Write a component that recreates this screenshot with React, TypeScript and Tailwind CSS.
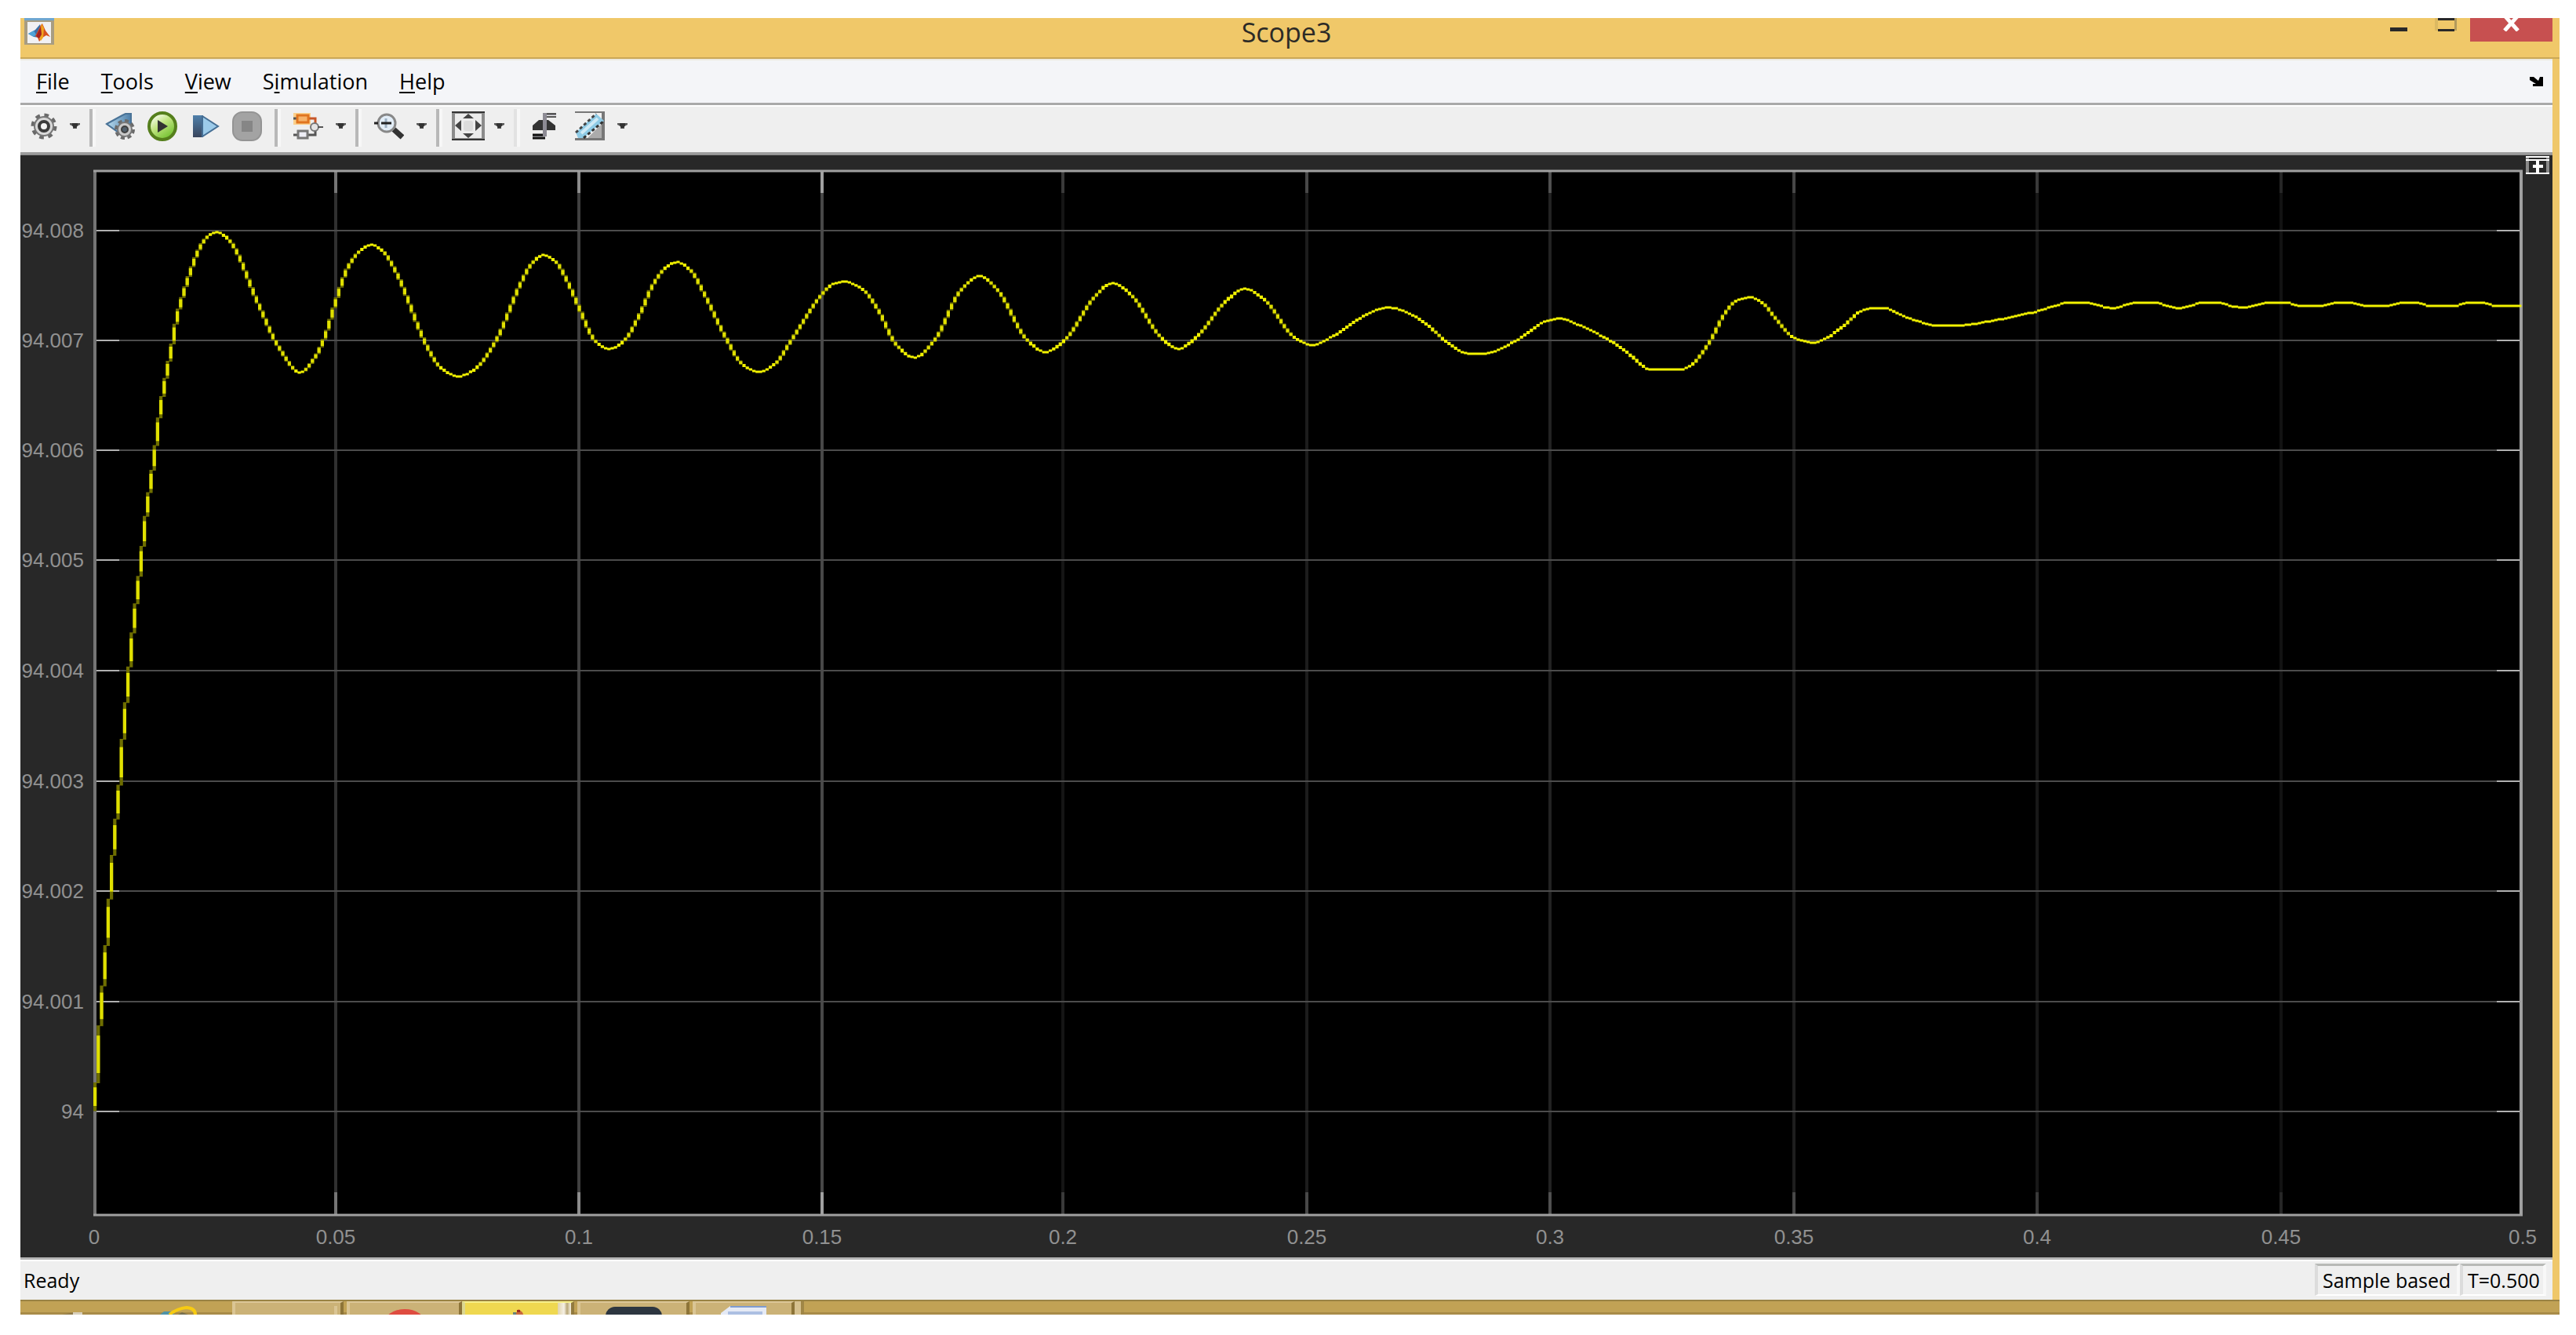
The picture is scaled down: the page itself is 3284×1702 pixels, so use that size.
import type { ButtonHTMLAttributes, ReactNode } from 'react';
import clsx from 'clsx';

type Point = [number, number];

const MENUS = ['File', 'Tools', 'View', 'Simulation', 'Help'];

/* Plot area inside the scope canvas */
const LEFT = 121;
const RIGHT = 3214;
const TOP = 218;
const BOTTOM = 1549;

const Y_TICKS = [
  { label: '94.008', y: 294 },
  { label: '94.007', y: 434 },
  { label: '94.006', y: 574 },
  { label: '94.005', y: 714 },
  { label: '94.004', y: 855 },
  { label: '94.003', y: 996 },
  { label: '94.002', y: 1136 },
  { label: '94.001', y: 1277 },
  { label: '94', y: 1417 },
];

const X_TICKS = [
  { label: '0', x: 120 },
  { label: '0.05', x: 428, line: '#303030', tick: '#757575' },
  { label: '0.1', x: 738, line: '#404040', tick: '#8c8c8c' },
  { label: '0.15', x: 1048, line: '#484848', tick: '#a0a0a0' },
  { label: '0.2', x: 1355, line: '#151515', tick: '#3a3a3a' },
  { label: '0.25', x: 1666, line: '#1c1c1c', tick: '#484848' },
  { label: '0.3', x: 1976, line: '#222222', tick: '#505050' },
  { label: '0.35', x: 2287, line: '#1e1e1e', tick: '#484848' },
  { label: '0.4', x: 2597, line: '#181818', tick: '#3a3a3a' },
  { label: '0.45', x: 2908, line: '#121212', tick: '#262626' },
  { label: '0.5', x: 3216 },
];

const SIGNAL: Point[] = [
  [121, 1416], [125, 1351], [129, 1283], [134, 1233], [138, 1170], [142, 1123], [146, 1066],
  [151, 1021], [155, 967], [159, 915], [163, 877], [167, 829], [171, 793], [176, 749],
  [180, 717], [184, 676], [188, 645], [193, 610], [197, 583], [201, 549], [205, 518],
  [209, 496], [214, 468], [218, 449], [222, 425], [226, 403], [234, 374], [243, 346],
  [251, 324], [260, 307], [268, 299], [276, 296], [292, 306], [330, 389], [355, 442],
  [383, 475], [402, 455], [414, 430], [428, 385], [444, 340], [460, 319], [473, 312],
  [487, 319], [505, 347], [545, 443], [562, 469], [584, 480], [605, 471], [632, 435],
  [664, 361], [678, 336], [693, 325], [708, 333], [724, 360], [738, 392], [760, 436],
  [778, 445], [796, 434], [817, 398], [832, 364], [848, 342], [863, 334], [880, 344],
  [898, 375], [925, 430], [947, 465], [967, 474], [987, 465], [1010, 432], [1048, 375],
  [1062, 362], [1077, 359], [1100, 369], [1120, 396], [1143, 440], [1166, 456], [1192, 433],
  [1225, 370], [1249, 352], [1272, 370], [1309, 433], [1333, 449], [1358, 433], [1396, 378],
  [1418, 361], [1442, 376], [1480, 430], [1502, 445], [1527, 428], [1562, 385], [1587, 368],
  [1612, 382], [1650, 430], [1672, 440], [1695, 431], [1735, 405], [1755, 395], [1771, 392],
  [1795, 399], [1822, 416], [1843, 435], [1868, 450], [1876, 451], [1892, 451], [1935, 433],
  [1970, 410], [1988, 406], [2012, 414], [2050, 433], [2075, 450], [2095, 467], [2103, 471],
  [2143, 471], [2156, 466], [2170, 450], [2183, 430], [2198, 401], [2214, 383], [2231, 379],
  [2247, 386], [2262, 404], [2286, 430], [2300, 435], [2312, 437], [2325, 433], [2352, 414],
  [2372, 397], [2386, 393], [2404, 393], [2422, 401], [2450, 411], [2470, 415], [2497, 415],
  [2540, 409], [2570, 403], [2597, 397], [2620, 390], [2637, 386], [2663, 386], [2677, 390],
  [2692, 393], [2710, 389], [2722, 386], [2748, 386], [2762, 390], [2776, 393], [2795, 389],
  [2806, 386], [2830, 386], [2844, 390], [2858, 392], [2877, 389], [2890, 386], [2916, 386],
  [2930, 390], [2961, 390], [2976, 386], [2998, 386], [3014, 390], [3046, 390], [3060, 386],
  [3080, 386], [3098, 390], [3130, 390], [3146, 386], [3164, 386], [3182, 390], [3214, 390],
];

/* Monotone cubic interpolation, keeps the extrema of the signal where they are */
function interpolate(points: Point[]) {
  const n = points.length;
  const slope: number[] = [];
  for (let i = 0; i < n - 1; i++) {
    slope.push((points[i + 1][1] - points[i][1]) / (points[i + 1][0] - points[i][0]));
  }
  const tangent = points.map((_, i) => {
    if (i === 0) return slope[0];
    if (i === n - 1) return slope[n - 2];
    if (slope[i - 1] * slope[i] <= 0) return 0;
    return (2 * slope[i - 1] * slope[i]) / (slope[i - 1] + slope[i]);
  });

  return (x: number) => {
    let i = 0;
    while (i < n - 2 && points[i + 1][0] < x) i++;
    const h = points[i + 1][0] - points[i][0];
    const t = Math.min(1, Math.max(0, (x - points[i][0]) / h));
    const t2 = t * t;
    const t3 = t2 * t;
    return (
      (2 * t3 - 3 * t2 + 1) * points[i][1] +
      (t3 - 2 * t2 + t) * h * tangent[i] +
      (3 * t2 - 2 * t3) * points[i + 1][1] +
      (t3 - t2) * h * tangent[i + 1]
    );
  };
}

function column(x: number, center: number, width: number, height: number) {
  return `M${x.toFixed(1)} ${(center - height / 2).toFixed(1)}h${width}v${height.toFixed(1)}h-${width}z`;
}

/* The scope rasterises its trace in columns; steep ones fade towards their ends */
function buildTrace() {
  const at = interpolate(SIGNAL);
  const step = 4.2;
  const paths = { flat: '', bright: '', dim: '' };
  for (let x = LEFT - 2; x < RIGHT; x += step) {
    const y1 = at(x);
    const y2 = at(Math.min(RIGHT, x + step));
    const center = (y1 + y2) / 2;
    const height = Math.max(3, Math.abs(y2 - y1) + 1);
    if (height < 5) {
      paths.flat += column(x, Math.round(center), step, height);
    } else {
      paths.dim += column(x, center, step, height);
      paths.bright += column(x, center, step, height * 0.65);
    }
  }
  return paths;
}

const TRACE = buildTrace();

interface ToolButtonProps extends ButtonHTMLAttributes<HTMLButtonElement> {
  label: string;
  children: ReactNode;
}

function ToolButton({ label, children, className, ...props }: ToolButtonProps) {
  return (
    <button type="button" aria-label={label} className={clsx('shrink-0', className)} {...props}>
      {children}
    </button>
  );
}

function Caret({ label, className }: { label: string; className?: string }) {
  return (
    <ToolButton label={label} className={className}>
      <svg width="13" height="7" viewBox="0 0 13 7" className="block">
        <path d="M0 0h13v2L9 4v3H4V4L0 2z" fill="#5a5a5a" />
        <path d="M3 0h7v3L8 6H5L3 3z" fill="#333" />
      </svg>
    </ToolButton>
  );
}

function Separator({ faint = false, className }: { faint?: boolean; className?: string }) {
  return (
    <div
      className={clsx(
        'h-12 w-2 shrink-0 self-end border-l-4 bg-[#f7f7f7]',
        faint ? 'border-[#e2e2e2]' : 'border-[#b8b8b8]',
        className,
      )}
    />
  );
}

function MatlabIcon() {
  return (
    <svg width="38" height="34" viewBox="0 0 38 34">
      <path d="M0 0h38v3H0z" fill="#6ea6d0" />
      <path d="M0 3h38v31H0z" fill="#a89d82" />
      <path d="M4 5h30v27H4z" fill="#f1f1f3" />
      <path d="M5 20l9-5 6-7 2 8-3 9-7-1z" fill="#3b6fa8" />
      <path d="M5 20l7-4 3 5-3 3z" fill="#4fa3d6" />
      <path d="M14 23l7-14 2-2 4 9 6 8-5-2-5 3-4 5-2-5z" fill="#d8531e" />
      <path d="M22 7l3 6-1 12-3 4-2-3z" fill="#f0a51e" />
      <path d="M15 23l6-12 1 10-3 5z" fill="#a32222" />
    </svg>
  );
}

function GearIcon() {
  return (
    <svg width="34" height="34" viewBox="0 0 34 34" className="block">
      <circle cx="17" cy="17" r="14" fill="none" stroke="#6a6a6a" strokeWidth="5" strokeDasharray="5.5 5.5" />
      <circle cx="17" cy="17" r="12" fill="#d9d9d9" stroke="#777" strokeWidth="2" />
      <circle cx="17" cy="17" r="6" fill="#f4f4f4" stroke="#3c3c3c" strokeWidth="4" />
    </svg>
  );
}

function StepBackIcon() {
  return (
    <svg width="38" height="34" viewBox="0 0 38 34" className="block">
      <defs>
        <linearGradient id="back" x1="0" x2="1">
          <stop offset="0" stopColor="#b9dcf0" />
          <stop offset="1" stopColor="#4d7ea8" />
        </linearGradient>
      </defs>
      <path d="M2 14L22 3l4-2h7v20l-13 6z" fill="url(#back)" stroke="#4a7397" strokeWidth="2" />
      <circle cx="25" cy="21" r="11" fill="none" stroke="#6b6b6b" strokeWidth="4" strokeDasharray="5 3.6" />
      <circle cx="25" cy="21" r="9" fill="#c9c9c9" stroke="#777" strokeWidth="2" />
      <circle cx="25" cy="21" r="4" fill="#53606b" stroke="#3f3f3f" strokeWidth="2" />
    </svg>
  );
}

function RunIcon() {
  return (
    <svg width="38" height="38" viewBox="0 0 38 38" className="block">
      <defs>
        <linearGradient id="run" x1="0" y1="0" x2="0.7" y2="1">
          <stop offset="0.1" stopColor="#ffffff" />
          <stop offset="0.5" stopColor="#c0e480" />
          <stop offset="1" stopColor="#6fc02c" />
        </linearGradient>
      </defs>
      <circle cx="19" cy="19" r="17" fill="url(#run)" stroke="#557f1c" strokeWidth="4" />
      <path d="M13 11l13 8-13 8z" fill="#333" />
    </svg>
  );
}

function StepForwardIcon() {
  return (
    <svg width="34" height="28" viewBox="0 0 34 28" className="block">
      <defs>
        <linearGradient id="bar" x1="0" y1="0" x2="0" y2="1">
          <stop offset="0" stopColor="#4f80ab" />
          <stop offset="1" stopColor="#39455c" />
        </linearGradient>
      </defs>
      <path d="M0 0h13v28H0z" fill="url(#bar)" />
      <path d="M12 1l20 13-20 13z" fill="#9ccbea" stroke="#456e94" strokeWidth="2" />
    </svg>
  );
}

function StopIcon() {
  return (
    <svg width="38" height="38" viewBox="0 0 38 38" className="block">
      <rect x="1" y="1" width="36" height="36" rx="12" fill="#a3a3a3" stroke="#949494" strokeWidth="2" />
      <path d="M12 12h14v14H12z" fill="#868686" />
    </svg>
  );
}

function BlocksIcon() {
  return (
    <svg width="38" height="34" viewBox="0 0 38 34" className="block">
      <path d="M0 0h22v15H0z" fill="#fbd08b" />
      <path d="M20 7h8v8" fill="none" stroke="#c75628" strokeWidth="3" />
      <path d="M0 7h4M0 28h6M18 28h10v-7" fill="none" stroke="#555" strokeWidth="3" />
      <rect x="5" y="3" width="14" height="9" fill="#f6b26a" stroke="#e07420" strokeWidth="3" />
      <rect x="6" y="23" width="12" height="9" fill="#eeeef6" stroke="#777" strokeWidth="3" />
      <circle cx="27" cy="18" r="5" fill="#e4e4e4" stroke="#777" strokeWidth="2" />
      <path d="M31 18h7" stroke="#555" strokeWidth="2" />
    </svg>
  );
}

function ZoomIcon() {
  return (
    <svg width="38" height="34" viewBox="0 0 38 34" className="block">
      <path d="M25 21l11 10" stroke="#333" strokeWidth="7" />
      <circle cx="16" cy="13" r="11" fill="#e2edf7" stroke="#888" strokeWidth="3" />
      <path d="M15 7v12" stroke="#9db0c2" strokeWidth="3" />
      <path d="M9 13h13M0 13h5" stroke="#222" strokeWidth="3" />
    </svg>
  );
}

function FitIcon() {
  return (
    <svg width="42" height="37" viewBox="0 0 42 37" className="block">
      <rect x="2" y="1" width="38" height="35" fill="#ececec" stroke="#8b8b8b" strokeWidth="4" />
      <path d="M0 1h42M0 36h42" stroke="#333" strokeWidth="2" />
      <path d="M21 3l7 6H14zM21 34l7-6H14zM4 18l8-7v14zM38 18l-8-7v14z" fill="#444" />
      <rect x="15" y="12" width="12" height="13" rx="3" fill="#dcdcdc" />
    </svg>
  );
}

function TriggerIcon() {
  return (
    <svg width="30" height="34" viewBox="0 0 30 34" className="block">
      <path d="M0 22v-6l8-7h12l9 7v6z" fill="#333" />
      <path d="M13 0h17v3H18v27H0v-3h13z" fill="#8d8b94" />
      <path d="M18 5h12M18 1h12" stroke="#555" strokeWidth="2" />
      <path d="M0 28h13M0 32h16" stroke="#111" strokeWidth="3" />
    </svg>
  );
}

function MeasureIcon() {
  return (
    <svg width="38" height="37" viewBox="0 0 38 37" className="block">
      <path d="M0 0h38v37H0z" fill="#777" />
      <path d="M0 2h34v32H0z" fill="#f0f0f0" />
      <path d="M34 34H16l18-18z" fill="#ababab" />
      <path d="M1 27L27 3l10 9-26 22H4z" fill="#8fcbe6" />
      <path d="M1 27L27 3" stroke="#444" strokeWidth="3" strokeDasharray="4 3" />
      <path d="M11 34l26-22" stroke="#333" strokeWidth="3" strokeDasharray="4 3" />
      <path d="M8 28L29 9" stroke="#cfeaf6" strokeWidth="4" />
    </svg>
  );
}

function TitleBar() {
  return (
    <header className="grid h-[52px] grid-cols-[1fr_auto_1fr] border-b-2 border-[#cba856] bg-[#f0c869] pr-[9px]">
      <div className="pl-[5px]">
        <MatlabIcon />
      </div>
      <h1 className="text-[34px] leading-[36px] text-[#2c2a26]">Scope3</h1>
      <div className="flex items-start justify-end">
        <button type="button" aria-label="Minimize" className="flex h-[30px] w-[58px] items-center justify-center">
          <svg width="22" height="22" viewBox="0 0 22 22">
            <path d="M0 8h22v5H0z" fill="#292929" />
          </svg>
        </button>
        <button type="button" aria-label="Maximize" className="flex h-[30px] w-[62px] items-start justify-center">
          <svg width="28" height="17" viewBox="0 0 28 17">
            <path d="M0 0h4v16H0z" fill="#dcb961" />
            <path d="M25 0h3v16h-3z" fill="#b29a5c" />
            <path d="M4 0h21v3H4zM4 14h21v3H4z" fill="#292929" />
          </svg>
        </button>
        <button type="button" aria-label="Close" className="flex h-[30px] w-[105px] items-start justify-center bg-[#c75050]">
          <svg width="22" height="17" viewBox="0 0 22 17">
            <path d="M2 -3l17 19M19 -3L2 16" stroke="#fff" strokeWidth="5" />
          </svg>
        </button>
      </div>
    </header>
  );
}

function MenuBar() {
  return (
    <nav className="flex h-[56px] items-center border-t-2 border-[#eceadf] bg-[#f4f5f8] text-[27px] leading-[36px] text-black">
      {MENUS.map((menu) => {
        const mnemonic = menu === 'Simulation' ? 1 : 0;
        return (
          <button key={menu} type="button" className="px-5">
            {menu.slice(0, mnemonic)}
            <span className="underline decoration-2 underline-offset-3">{menu[mnemonic]}</span>
            {menu.slice(mnemonic + 1)}
          </button>
        );
      })}
      <button type="button" aria-label="Dock window" className="mr-3 ml-auto">
        <svg width="17" height="12" viewBox="0 0 17 12" className="block">
          <path d="M0 0h5l6 5 2-5h4v12H4V9h4L0 4z" fill="#000" />
        </svg>
      </button>
    </nav>
  );
}

function Toolbar() {
  return (
    <div
      role="toolbar"
      className="flex h-[66px] items-center border-y-3 border-t-[#a9a9a9] border-b-[#9c9c9c] bg-[#efefef] pb-[7px] pl-[13px] shadow-[inset_0_2px_#fff]"
    >
      <ToolButton label="Configuration properties"><GearIcon /></ToolButton>
      <Caret label="Configuration menu" className="ml-4" />
      <Separator className="ml-3" />
      <ToolButton label="Step back" className="ml-3"><StepBackIcon /></ToolButton>
      <ToolButton label="Run" className="ml-4"><RunIcon /></ToolButton>
      <ToolButton label="Step forward" className="ml-5"><StepForwardIcon /></ToolButton>
      <ToolButton label="Stop" className="ml-4" disabled><StopIcon /></ToolButton>
      <Separator className="ml-4" />
      <ToolButton label="Highlight block" className="ml-4"><BlocksIcon /></ToolButton>
      <Caret label="Highlight menu" className="ml-4" />
      <Separator className="ml-3" />
      <ToolButton label="Zoom" className="ml-4"><ZoomIcon /></ToolButton>
      <Caret label="Zoom menu" className="ml-4" />
      <Separator className="ml-3" />
      <ToolButton label="Scale axes" className="ml-3"><FitIcon /></ToolButton>
      <Caret label="Scale menu" className="ml-3" />
      <Separator faint className="ml-3" />
      <ToolButton label="Triggers" className="ml-4"><TriggerIcon /></ToolButton>
      <ToolButton label="Measurements" className="ml-6"><MeasureIcon /></ToolButton>
      <Caret label="Measurements menu" className="ml-4" />
    </div>
  );
}

function ScopePlot() {
  return (
    <main className="relative border-t border-[#8a8a8a] bg-[#282828]">
      <svg viewBox="26 198 3228 1405" className="block h-auto w-full" role="img" aria-label="Scope signal">
        <rect x={LEFT} y={TOP} width={RIGHT - LEFT} height={BOTTOM - TOP} fill="#000" />
        {X_TICKS.filter((tick) => tick.line).map(({ label, x, line, tick }) => (
          <g key={label} strokeWidth="4">
            <path d={`M${x} ${TOP}V${BOTTOM}`} stroke={line} />
            <path d={`M${x} ${TOP}v28M${x} ${BOTTOM}v-29`} stroke={tick} />
          </g>
        ))}
        {Y_TICKS.map(({ label, y }) => (
          <g key={label} strokeWidth="2">
            <path d={`M${LEFT} ${y}H${RIGHT}`} stroke="#4c4c4c" />
            <path d={`M${LEFT} ${y}h31M${RIGHT} ${y}h-31`} stroke="#b0b0b0" />
          </g>
        ))}
        <path d={`M${LEFT} ${TOP}V${BOTTOM}`} stroke="#757575" strokeWidth="4" />
        <path d={`M${RIGHT} ${TOP}V${BOTTOM}`} stroke="#a0a0a0" strokeWidth="4" />
        <path d={`M119 ${TOP}H3216M119 ${BOTTOM}H3216`} stroke="#a0a0a0" strokeWidth="3" />
        <path d={TRACE.flat} fill="#f2f200" />
        <path d={TRACE.dim} fill="#6e6e00" />
        <path d={TRACE.bright} fill="#e0e000" />
        <g fill="#919191" fontSize="26">
          {Y_TICKS.map(({ label, y }) => (
            <text key={label} x="107" y={y + 9} textAnchor="end" className="font-['Liberation_Sans',sans-serif]">
              {label}
            </text>
          ))}
          {X_TICKS.map(({ label, x }) => (
            <text key={label} x={x} y="1586" textAnchor="middle" className="font-['Liberation_Sans',sans-serif]">
              {label}
            </text>
          ))}
        </g>
      </svg>
      <button type="button" aria-label="Maximize axes" className="absolute top-0 right-1">
        <svg width="30" height="24" viewBox="0 0 30 24" className="block">
          <path d="M2 2v20M28 2v20" stroke="#8a8a8a" strokeWidth="4" />
          <path d="M0 2h30M0 6h30M0 23h30" stroke="#fff" strokeWidth="2" />
          <path d="M9 14h13M15 7v15" stroke="#fff" strokeWidth="4" />
        </svg>
      </button>
    </main>
  );
}

function StatusBar() {
  const cell =
    'border-x-4 border-t-3 border-b-2 border-t-[#b7b9b6] border-r-[#f8f8f8] border-b-white border-l-[#dcdcdc] pl-1.5';
  return (
    <footer className="flex h-[54px] items-center border-t-3 border-[#b5b5b5] bg-[#efefef] text-[25px] leading-[36px] text-black shadow-[inset_0_2px_#fff]">
      <span className="pl-1">Ready</span>
      <div className="mr-2 ml-auto flex">
        <span className={clsx(cell, 'w-[185px]')}>Sample based</span>
        <span className={clsx(cell, 'w-[110px]')}>T=0.500</span>
      </div>
    </footer>
  );
}

function TaskButton({ label, className, children }: { label: string; className?: string; children?: ReactNode }) {
  return (
    <button
      type="button"
      aria-label={label}
      className={clsx(
        'flex h-full items-start justify-center overflow-hidden border-x-4 border-t-2 pt-1',
        className ?? 'border-t-[#dcc798] border-r-[#8d7438] border-l-[#dac594] bg-[#cbb277]',
      )}
    >
      {children}
    </button>
  );
}

function Taskbar() {
  return (
    <div className="flex h-[19px] overflow-hidden border-t-2 border-[#9a8344] bg-[#c1a255] shadow-[inset_0_-3px_#a88b48]">
      <button type="button" aria-label="Start" className="flex w-[134px] items-end justify-center">
        <svg width="28" height="4" viewBox="0 0 28 4" className="block">
          <path d="M0 4l16-3v3z" fill="#8f7a48" />
          <path d="M14 1h12v3H14z" fill="#d8d0bd" />
        </svg>
      </button>
      <button type="button" aria-label="Internet Explorer" className="flex w-[136px] items-end justify-center">
        <svg width="48" height="11" viewBox="0 0 48 11" className="block">
          <path d="M0 11l5-4h13v4z" fill="#4e93a8" />
          <path d="M12 11Q22 3 34 2Q45 3 45 11" fill="none" stroke="#f7cb12" strokeWidth="4" />
          <path d="M23 11l5-3 8 3z" fill="#777050" />
        </svg>
      </button>
      <div className="grid h-full grid-cols-[142px_151px_143px_147px_134px_12px]">
        <TaskButton label="Explorer">
          <span className="ml-auto h-full w-2 border-l-4 border-[#dac594]" />
        </TaskButton>
        <div className="grid h-full pl-1">
          <TaskButton label="Chrome">
            <svg width="48" height="22" viewBox="0 0 48 22" className="mt-1">
              <ellipse cx="24" cy="18" rx="26" ry="18" fill="#df4c40" />
            </svg>
          </TaskButton>
        </div>
        <TaskButton
          label="MATLAB"
          className="border-t-[#f7f08a] border-r-[#927a3e] border-l-[#dcd791] bg-[linear-gradient(90deg,#efd850_118px,#e0d3ab_118px,#f5f0e4_126px,#b8a676_130px,#eee7d3_134px)]"
        >
          <svg width="14" height="9" viewBox="0 0 14 9" className="mt-1">
            <path d="M0 9l3-5h3L7 0l5 4 2 5z" fill="#c96a3c" />
            <path d="M5 1h4v3H5z" fill="#9c2b22" />
            <path d="M0 4h4v5H0z" fill="#68837a" />
          </svg>
        </TaskButton>
        <div className="grid h-full pl-1">
          <TaskButton label="Media">
            <svg width="72" height="22" viewBox="0 0 72 22">
              <rect y="1" width="72" height="40" rx="12" fill="#2d3640" />
            </svg>
          </TaskButton>
        </div>
        <div className="grid h-full pl-1">
          <TaskButton label="Document">
            <svg width="58" height="22" viewBox="0 0 58 22">
              <path d="M0 9l12-9h46v22H0z" fill="#e5eaf5" />
              <path d="M12 1h46" stroke="#7f9cd0" strokeWidth="2" />
              <path d="M9 7h44v15H9z" fill="#acbfe2" />
            </svg>
          </TaskButton>
        </div>
        <div className="h-full border-r-4 border-[#a08646] bg-[#d6c18f]" />
      </div>
    </div>
  );
}

export default function App() {
  return (
    <div className="min-h-screen bg-white pt-[23px] pr-[21px] pb-[26px] pl-[26px] font-['Open_Sans',sans-serif]">
      <TitleBar />
      <div className="border-r-[9px] border-[#efc76a]">
        <MenuBar />
        <Toolbar />
        <ScopePlot />
        <StatusBar />
      </div>
      <Taskbar />
    </div>
  );
}
